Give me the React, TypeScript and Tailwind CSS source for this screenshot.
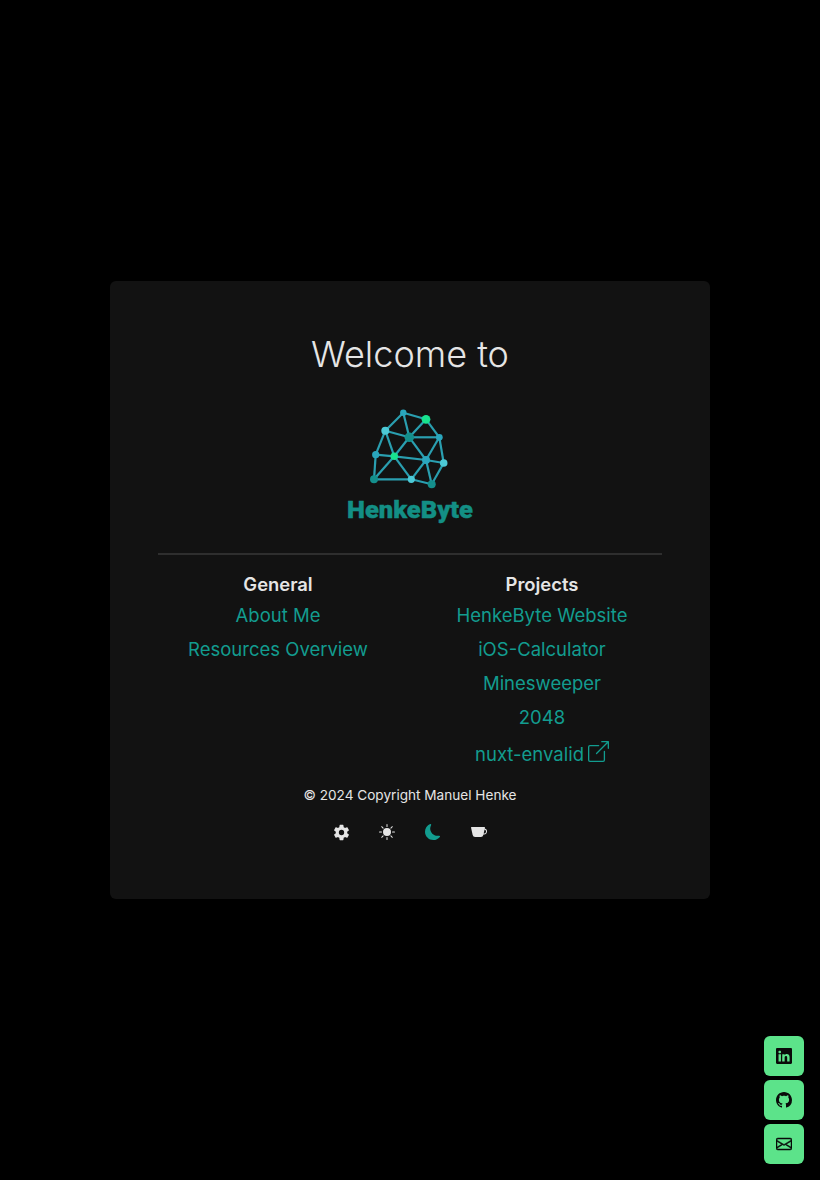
import { BsBoxArrowUpRight, BsCupFill, BsEnvelope, BsGithub, BsLinkedin, BsMoonFill, BsSunFill } from 'react-icons/bs'
import { IoSettingsSharp } from 'react-icons/io5'

const general = ['About Me', 'Resources Overview']
const projects = ['HenkeByte Website', 'iOS-Calculator', 'Minesweeper', '2048']

const nodes: Record<string, [number, number, number, string]> = {
  a: [73.3, 12.7, 3.2, '#2aa6bd'],
  b: [96, 19.3, 4.4, '#18e38f'],
  c: [55.3, 30.7, 4, '#4cc9d6'],
  d: [79.3, 37.3, 4.8, '#148f8c'],
  e: [109.3, 37.3, 3.4, '#2aa6bd'],
  f: [45.7, 54.7, 3.6, '#2aa6bd'],
  g: [64.3, 56.3, 3.8, '#18e38f'],
  h: [96, 60, 4, '#2aa6bd'],
  i: [113.7, 63, 3.8, '#4cc9d6'],
  j: [44, 79.3, 4, '#148f8c'],
  k: [81.3, 79.3, 3.6, '#4cc9d6'],
  l: [101.7, 84.3, 4, '#148f8c'],
}

const edges = ['ab', 'ac', 'ad', 'bd', 'be', 'cd', 'cf', 'cg', 'de', 'dg', 'dh', 'eh', 'ei', 'fg', 'fj', 'gh', 'gj', 'gk', 'hk', 'hi', 'hl', 'il', 'jk', 'kl']

function Logo() {
  return (
    <svg width="160" height="130" viewBox="0 0 160 130" className="block">
      {edges.map((e) => {
        const p = nodes[e[0]]
        const q = nodes[e[1]]
        return <line key={e} x1={p[0]} y1={p[1]} x2={q[0]} y2={q[1]} stroke="#2a9fb0" strokeWidth="2.2" />
      })}
      {Object.entries(nodes).map(([k, n]) => (
        <circle key={k} cx={n[0]} cy={n[1]} r={n[2]} fill={n[3]} />
      ))}
      <text x="17" y="118" textLength="126" lengthAdjust="spacingAndGlyphs" fill="#138f85" fontFamily="Roboto, sans-serif" fontWeight="900" fontSize="24" stroke="#138f85" strokeWidth="0.4">
        HenkeByte
      </text>
    </svg>
  )
}

export default function App() {
  return (
    <div className="min-h-screen bg-black flex items-center justify-center text-[#e5e5e5]" style={{ fontFamily: 'Inter, sans-serif' }}>
      <div className="w-[600px] h-[618px] rounded-md bg-[#121212] px-12 pt-12 flex flex-col items-center">
        <h1 className="text-[36px] leading-[50px] font-light">Welcome to</h1>
        <div className="mt-[21px]">
          <Logo />
        </div>
        <hr className="w-full mt-[23px] border-t-2 border-[#2e2e2e]" />
        <div className="w-full grid grid-cols-2 gap-6 mt-[15px] text-center">
          <div className="flex flex-col items-center">
            <h2 className="text-[18.4px] leading-[28px] font-semibold mb-[3px]">General</h2>
            {general.map((l) => (
              <a key={l} className="text-[18.5px] leading-[28px] mb-[6px] text-[#129c8f]">{l}</a>
            ))}
          </div>
          <div className="flex flex-col items-center">
            <h2 className="text-[18.4px] leading-[28px] font-semibold mb-[3px]">Projects</h2>
            {projects.map((l) => (
              <a key={l} className="text-[18.5px] leading-[28px] mb-[6px] text-[#129c8f]">{l}</a>
            ))}
            <a className="flex items-center gap-1 text-[18.5px] leading-[28px] mt-[3px] text-[#129c8f]">
              nuxt-envalid
              <BsBoxArrowUpRight className="w-[21px] h-[21px] -mt-[5px]" />
            </a>
          </div>
        </div>
        <p className="mt-[17px] text-[13.6px] leading-5">© 2024 Copyright Manuel Henke</p>
        <div className="mt-[18px] flex items-center gap-[30px] h-[18px]">
          <IoSettingsSharp className="w-[17px] h-[17px] -mx-[0.5px] text-[#e5e5e5]" />
          <BsSunFill className="w-4 h-4 text-[#e5e5e5]" />
          <BsMoonFill className="w-4 h-4 text-[#129c8f]" />
          <BsCupFill className="w-4 h-4 text-[#e5e5e5]" />
        </div>
      </div>
      <div className="fixed right-4 bottom-4 flex flex-col gap-1">
        <a className="w-10 h-10 rounded-md bg-[#5ce38a] flex items-center justify-center text-[#0a0a0a]"><BsLinkedin className="w-4 h-4" /></a>
        <a className="w-10 h-10 rounded-md bg-[#5ce38a] flex items-center justify-center text-[#0a0a0a]"><BsGithub className="w-4 h-4" /></a>
        <a className="w-10 h-10 rounded-md bg-[#5ce38a] flex items-center justify-center text-[#0a0a0a]"><BsEnvelope className="w-4 h-4 stroke-[0.5px]" /></a>
      </div>
    </div>
  )
}
